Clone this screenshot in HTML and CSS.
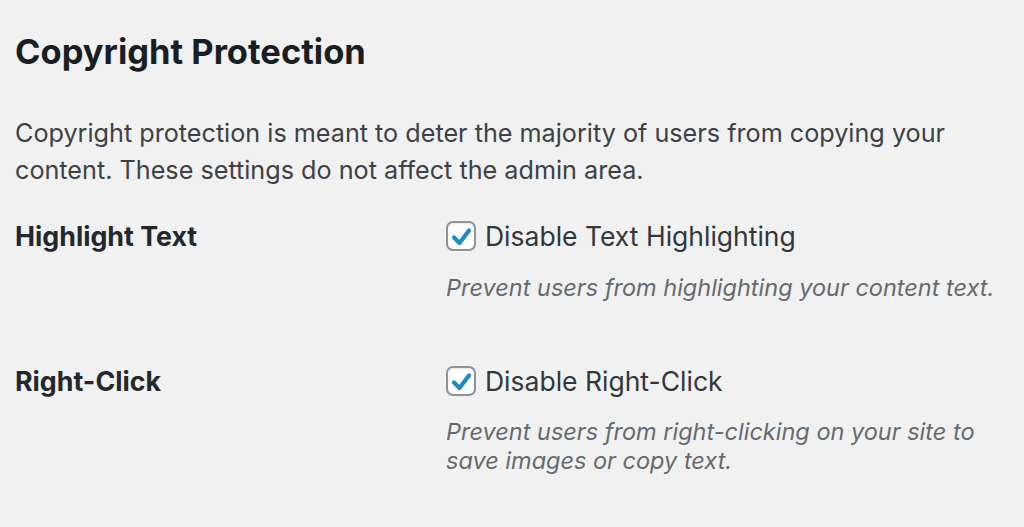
FILE: index.html
```html
<!DOCTYPE html>
<html>
<head>
<meta charset="utf-8">
<link rel="stylesheet" href="styles.css">
</head>
<body>
<div class="wrap">
  <h2 class="title">Copyright Protection</h2>
  <p class="intro">Copyright protection is meant to deter the majority of users from copying your content. These settings do not affect the admin area.</p>
  <div class="form">
    <div class="row">
      <div class="label">Highlight Text</div>
      <div class="field">
        <label class="check">
          <span class="box"><svg viewBox="0 0 26 26" width="26" height="26"><path d="M6 14.5 L11.5 20 L21 7.5" fill="none" stroke="#1e8cbe" stroke-width="4.2" stroke-linecap="round" stroke-linejoin="round"/></svg></span>
          <span>Disable Text Highlighting</span>
        </label>
        <p class="desc">Prevent users from highlighting your content text.</p>
      </div>
    </div>
    <div class="row">
      <div class="label">Right-Click</div>
      <div class="field">
        <label class="check">
          <span class="box"><svg viewBox="0 0 26 26" width="26" height="26"><path d="M6 14.5 L11.5 20 L21 7.5" fill="none" stroke="#1e8cbe" stroke-width="4.2" stroke-linecap="round" stroke-linejoin="round"/></svg></span>
          <span>Disable Right-Click</span>
        </label>
        <p class="desc">Prevent users from right-clicking on your site to save images or copy text.</p>
      </div>
    </div>
  </div>
</div>
</body>
</html>
```

FILE: styles.css
```css
html, body {
  margin: 0;
  padding: 0;
  background: #f1f1f1;
}
body {
  font-family: Inter, "Open Sans", "Liberation Sans", sans-serif;
  color: #32373c;
}
.wrap {
  padding: 0 14px 0 15px;
  width: 1010px;
  box-sizing: border-box;
}
.title {
  margin: 0;
  padding-top: 33px;
  font-size: 34.5px;
  line-height: 38px;
  font-weight: 700;
  color: #191e23;
}
.intro {
  margin: 43.5px 0 0 0;
  font-size: 25.2px;
  line-height: 37px;
  color: #3c4146;
}
.form {
  margin-top: 29.5px;
}
.row {
  display: grid;
  grid-template-columns: 431px 1fr;
  padding-bottom: 61px;
}
.label {
  font-size: 26.8px;
  font-weight: 700;
  line-height: 36px;
  color: #23282d;
}
.check {
  display: flex;
  align-items: center;
  gap: 9px;
  font-size: 26.5px;
  line-height: 36px;
  color: #32373c;
}
.box {
  width: 26px;
  height: 26px;
  border: 2px solid #8d9399;
  border-radius: 7px;
  background: #fff;
  display: flex;
  align-items: center;
  justify-content: center;
  box-shadow: inset 0 1px 2px rgba(0,0,0,0.1);
}
.desc {
  margin: 18.5px 0 0 0;
  font-size: 23.5px;
  line-height: 29px;
  font-style: italic;
  color: #666a6f;
}
```
